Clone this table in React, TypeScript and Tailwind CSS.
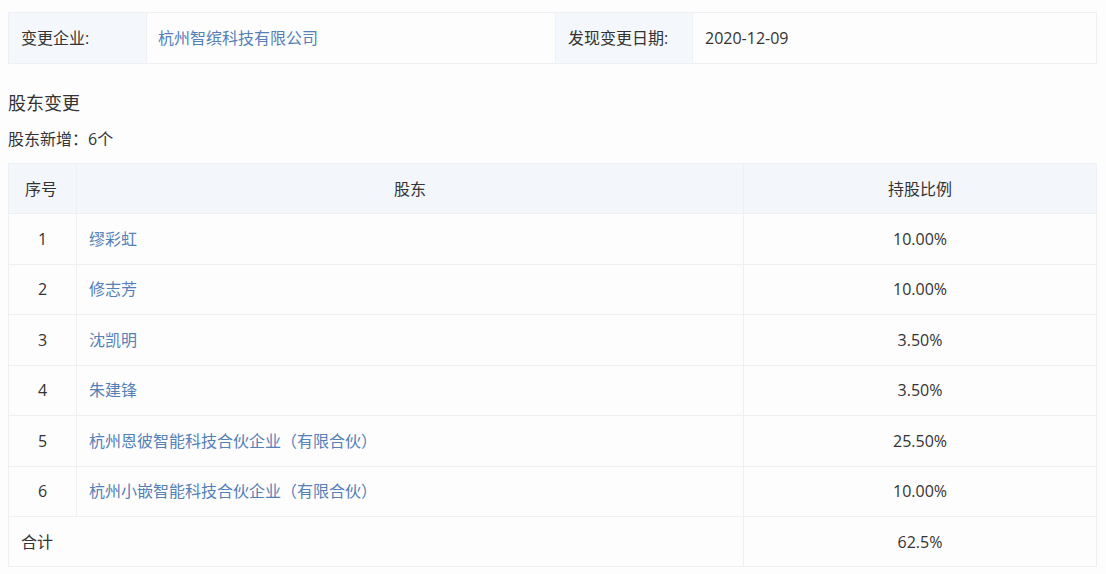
import React from "react";

const rows = [
  { n: 1, name: "缪彩虹", pct: "10.00%" },
  { n: 2, name: "修志芳", pct: "10.00%" },
  { n: 3, name: "沈凯明", pct: "3.50%" },
  { n: 4, name: "朱建锋", pct: "3.50%" },
  { n: 5, name: "杭州恩彼智能科技合伙企业（有限合伙）", pct: "25.50%" },
  { n: 6, name: "杭州小嵌智能科技合伙企业（有限合伙）", pct: "10.00%" },
];

export default function App() {
  return (
    <div
      className="w-[1106px] h-[574px] bg-[#fdfdfd] text-[#333] overflow-hidden"
      style={{ fontFamily: '"Open Sans", "Noto Sans CJK SC", sans-serif' }}
    >
      <div className="pt-[12px] pl-[8px] pr-[9px]">
        <table className="w-full border-collapse text-[16px]">
          <tbody>
            <tr className="h-[51px]">
              <td className="w-[138px] bg-[#f4f8fc] border border-[#eef0f3] pl-[12px]">变更企业:</td>
              <td className="w-[409px] border border-[#eef0f3] pl-[11px] text-[#5480b8]">杭州智缤科技有限公司</td>
              <td className="w-[137px] bg-[#f4f8fc] border border-[#eef0f3] pl-[12px]">发现变更日期:</td>
              <td className="border border-[#eef0f3] pl-[12px]">2020-12-09</td>
            </tr>
          </tbody>
        </table>
        <div className="text-[18px] leading-[24px] mt-[27px]">股东变更</div>
        <div className="text-[16px] leading-[22px] mt-[13px]">股东新增：6个</div>
        <table className="w-full border-collapse text-[16px] mt-[13px]">
          <thead>
            <tr className="h-[50px] bg-[#f3f6fa]">
              <th className="w-[68px] font-normal text-left pl-[16px] border border-[#eef0f3]">序号</th>
              <th className="w-[667px] font-normal text-center border border-[#eef0f3]">股东</th>
              <th className="font-normal text-center border border-[#eef0f3]">持股比例</th>
            </tr>
          </thead>
          <tbody>
            {rows.map((r) => (
              <tr key={r.n} className="h-[50.5px]">
                <td className="text-center border border-[#eef0f3]">{r.n}</td>
                <td className="pl-[12px] text-[#5480b8] border border-[#eef0f3]">{r.name}</td>
                <td className="text-center border border-[#eef0f3]">{r.pct}</td>
              </tr>
            ))}
            <tr className="h-[50px]">
              <td colSpan={2} className="pl-[12px] border border-[#eef0f3]">合计</td>
              <td className="text-center border border-[#eef0f3]">62.5%</td>
            </tr>
          </tbody>
        </table>
      </div>
    </div>
  );
}
